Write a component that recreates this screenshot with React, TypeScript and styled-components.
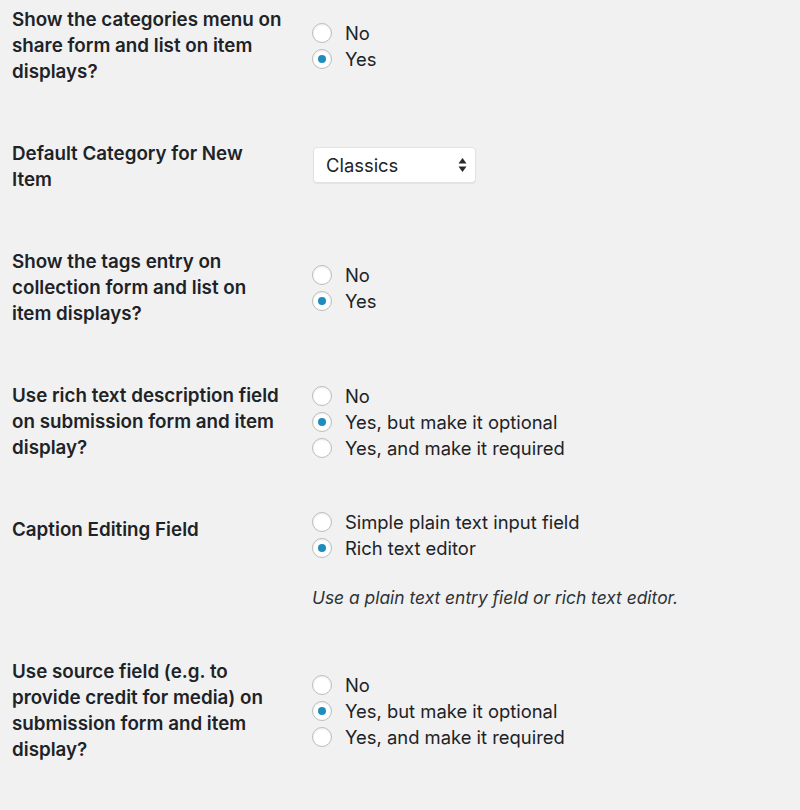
import React from "react";
import styled, { createGlobalStyle } from "styled-components";

const GlobalStyle = createGlobalStyle`
  html, body {
    margin: 0;
    padding: 0;
    background: #f1f1f1;
  }
  body {
    font-family: Inter, "Noto Sans", sans-serif;
    color: #1d2327;
    -webkit-font-smoothing: antialiased;
  }
`;

const Form = styled.div`
  padding: 0 12px;
  margin-top: -21px;
`;

const Row = styled.div`
  display: grid;
  grid-template-columns: 300px 1fr;
  align-items: center;
`;

const Label = styled.div`
  align-self: start;
  padding: 28px 10px 28px 0;
  font-size: 18.8px;
  font-weight: 600;
  line-height: 26px;
  color: #1d2327;
`;

const Line = styled.span`
  display: block;
  white-space: nowrap;
`;

const Control = styled.div`
  padding: 20px 10px 20px 0;
`;

const Choices = styled.div`
  display: flex;
  flex-direction: column;
`;

const Choice = styled.label`
  display: flex;
  align-items: center;
  gap: 13px;
  height: 26px;
  font-size: 18.4px;
  line-height: 26px;
  color: #1d2327;
  white-space: nowrap;
`;

const Radio = styled.input.attrs({ type: "radio" })`
  appearance: none;
  -webkit-appearance: none;
  margin: 0;
  width: 20px;
  height: 20px;
  flex: none;
  border-radius: 50%;
  border: 1px solid #b9bcc0;
  background: #fff;
  box-shadow: inset 0 1px 2px rgba(0, 0, 0, 0.08);
  display: grid;
  place-items: center;
  &:checked::before {
    content: "";
    width: 8px;
    height: 8px;
    border-radius: 50%;
    background: #1e8cbe;
  }
`;

const Description = styled.p`
  margin: 24px 0 0;
  font-size: 17.4px;
  font-style: italic;
  line-height: 26px;
  color: #2c3338;
  white-space: nowrap;
`;

const SelectBox = styled.div`
  display: flex;
  align-items: center;
  justify-content: space-between;
  box-sizing: border-box;
  width: 163px;
  height: 36px;
  margin: -2px 0 2px 1px;
  padding: 0 8px 0 12px;
  background: #fff;
  border: 1px solid #e2e2e2;
  border-radius: 4px;
  box-shadow: 0 1px 1px rgba(0, 0, 0, 0.06);
  font-size: 18.4px;
  color: #1d2327;
`;

const Arrows = () => (
  <svg width="9" height="16" viewBox="0 0 9 16" aria-hidden="true">
    <path d="M4.5 1 L8.5 6.5 L0.5 6.5 Z" fill="#2a2a2a" />
    <path d="M4.5 15 L8.5 9.5 L0.5 9.5 Z" fill="#2a2a2a" />
  </svg>
);

type Opt = { text: string; checked?: boolean };

const RadioGroup = ({ name, options }: { name: string; options: Opt[] }) => (
  <Choices>
    {options.map((o) => (
      <Choice key={o.text}>
        <Radio name={name} defaultChecked={!!o.checked} />
        {o.text}
      </Choice>
    ))}
  </Choices>
);

const Heading = ({ lines }: { lines: string[] }) => (
  <Label>
    {lines.map((l) => (
      <Line key={l}>{l}</Line>
    ))}
  </Label>
);

const yesNo: Opt[] = [{ text: "No" }, { text: "Yes", checked: true }];
const triple: Opt[] = [
  { text: "No" },
  { text: "Yes, but make it optional", checked: true },
  { text: "Yes, and make it required" },
];

export default function App() {
  return (
    <>
      <GlobalStyle />
      <Form>
        <Row>
          <Heading lines={["Show the categories menu on", "share form and list on item", "displays?"]} />
          <Control>
            <RadioGroup name="cats" options={yesNo} />
          </Control>
        </Row>
        <Row>
          <Heading lines={["Default Category for New", "Item"]} />
          <Control>
            <SelectBox>
              <span>Classics</span>
              <Arrows />
            </SelectBox>
          </Control>
        </Row>
        <Row>
          <Heading lines={["Show the tags entry on", "collection form and list on", "item displays?"]} />
          <Control>
            <RadioGroup name="tags" options={yesNo} />
          </Control>
        </Row>
        <Row>
          <Heading lines={["Use rich text description field", "on submission form and item", "display?"]} />
          <Control>
            <RadioGroup name="rich" options={triple} />
          </Control>
        </Row>
        <Row>
          <Heading lines={["Caption Editing Field"]} />
          <Control>
            <RadioGroup
              name="caption"
              options={[{ text: "Simple plain text input field" }, { text: "Rich text editor", checked: true }]}
            />
            <Description>Use a plain text entry field or rich text editor.</Description>
          </Control>
        </Row>
        <Row>
          <Heading
            lines={["Use source field (e.g. to", "provide credit for media) on", "submission form and item", "display?"]}
          />
          <Control>
            <RadioGroup name="source" options={triple} />
          </Control>
        </Row>
      </Form>
    </>
  );
}
